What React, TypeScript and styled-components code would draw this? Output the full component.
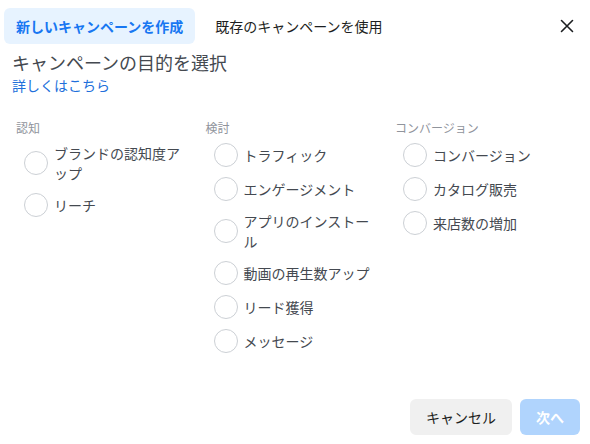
import styled, { createGlobalStyle } from "styled-components";

const GlobalStyle = createGlobalStyle`
    html, body {
        margin: 0;
        padding: 0;
        background: #FFFFFF;
    }
    body {
        font-family: "Noto Sans CJK JP", "Noto Sans", "Liberation Sans", sans-serif;
        color: #1c1e21;
    }
`;

const Dialog = styled.div`
    display: flex;
    flex-direction: column;
    width: 590px;
    height: 444px;
    box-sizing: border-box;
    background: #FFFFFF;
`;
const Header = styled.div`
    display: flex;
    align-items: center;
    gap: 8px;
    padding: 8px 10px 0px 4px;
`;
const Tab = styled.div<{ $active?: boolean }>`
    height: 36px;
    display: flex;
    align-items: center;
    padding: 0px 12px;
    border-radius: 6px;
    font-size: 14px;
    font-weight: ${p => p.$active ? 700 : 400};
    color: ${p => p.$active ? "#1877f2" : "#1c1e21"};
    background: ${p => p.$active ? "#e7f3ff" : "transparent"};
`;
const Close = styled.div`
    margin-left: auto;
    width: 24px;
    height: 24px;
    display: flex;
    align-items: center;
    justify-content: center;
    margin-right: 1px;
`;
const Intro = styled.div`
    padding: 5px 12px 0px 12px;
`;
const Title = styled.div`
    font-size: 18px;
    line-height: 26px;
    color: #444950;
`;
const Link = styled.div`
    font-size: 14px;
    line-height: 20px;
    color: #216fdb;
`;
const Columns = styled.div`
    display: grid;
    grid-template-columns: repeat(3, 189.5px);
    padding: 24px 0px 0px 16px;
`;
const Column = styled.div`
    display: flex;
    flex-direction: column;
`;
const Label = styled.div`
    font-size: 12px;
    line-height: 17px;
    color: #90949c;
    margin-bottom: 7px;
`;
const Options = styled.div`
    display: flex;
    flex-direction: column;
    gap: 10px;
    padding-left: 8px;
`;
const Option = styled.div`
    display: flex;
    align-items: center;
    gap: 6px;
`;
const Radio = styled.div`
    flex: none;
    width: 24px;
    height: 24px;
    box-sizing: border-box;
    border: 1px solid #ccd0d5;
    border-radius: 50%;
`;
const OptionText = styled.div`
    max-width: 134px;
    font-size: 14px;
    line-height: 20px;
    color: #444950;
`;
const Footer = styled.div`
    margin-top: auto;
    display: flex;
    justify-content: flex-end;
    gap: 8px;
    padding: 0px 10px 9px 0px;
`;
const Button = styled.div<{ $primary?: boolean }>`
    height: 36px;
    display: flex;
    align-items: center;
    justify-content: center;
    box-sizing: border-box;
    padding: 0px 16px;
    border-radius: 6px;
    font-size: 14px;
    font-weight: ${p => p.$primary ? 700 : 400};
    color: ${p => p.$primary ? "#FFFFFF" : "#1c1e21"};
    background: ${p => p.$primary ? "#b0d4fd" : "#f0f0f0"};
    min-width: ${p => p.$primary ? "60px" : "102px"};
`;

const groups = [
    { label: "認知", items: ["ブランドの認知度アップ", "リーチ"] },
    { label: "検討", items: ["トラフィック", "エンゲージメント", "アプリのインストール", "動画の再生数アップ", "リード獲得", "メッセージ"] },
    { label: "コンバージョン", items: ["コンバージョン", "カタログ販売", "来店数の増加"] },
];

function App() {
    return (
        <Dialog>
            <GlobalStyle />
            <Header>
                <Tab $active>新しいキャンペーンを作成</Tab>
                <Tab>既存のキャンペーンを使用</Tab>
                <Close>
                    <svg width="14" height="14" viewBox="0 0 14 14">
                        <path d="M1.5 1.5 L12.5 12.5 M12.5 1.5 L1.5 12.5" stroke="#1c1e21" strokeWidth="1.6" strokeLinecap="round" />
                    </svg>
                </Close>
            </Header>
            <Intro>
                <Title>キャンペーンの目的を選択</Title>
                <Link>詳しくはこちら</Link>
            </Intro>
            <Columns>
                {groups.map(g => (
                    <Column key={g.label}>
                        <Label>{g.label}</Label>
                        <Options>
                            {g.items.map(item => (
                                <Option key={item}>
                                    <Radio />
                                    <OptionText>{item}</OptionText>
                                </Option>
                            ))}
                        </Options>
                    </Column>
                ))}
            </Columns>
            <Footer>
                <Button>キャンセル</Button>
                <Button $primary>次へ</Button>
            </Footer>
        </Dialog>
    )
}

export default App;
